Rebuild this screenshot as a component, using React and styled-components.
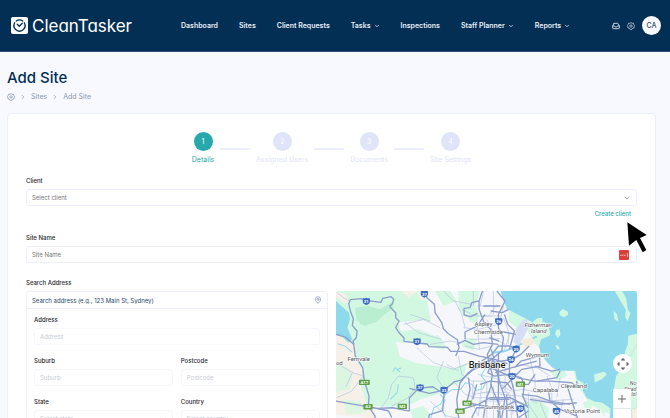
import styled, { createGlobalStyle, css } from "styled-components";
import { ChevronDown, ChevronRight, Inbox, MapPin, Minus, Plus } from "lucide-react";

const GlobalStyles = createGlobalStyle`
    :root {
        --color-navy: #042f55;
        --color-teal: #27a9ac;
        --color-page: #f8f9ff;
        --color-line: #eceefd;
        --color-step: #dfe4f8;
        --color-muted: #8797ae;
    }

    *, *::before, *::after {
        box-sizing: border-box;
        margin: 0;
        padding: 0;
    }

    html {
        scrollbar-width: none;
    }

    body {
        background-color: var(--color-page);
        color: #26282c;
        font-family: Inter, "Liberation Sans", sans-serif;
        font-size: 6px;
        line-height: 8px;
    }

    button, input, select {
        font: inherit;
        color: inherit;
        border: none;
        background: none;
    }

    a {
        color: inherit;
        text-decoration: none;
    }

    svg {
        display: block;
        flex-shrink: 0;
    }
`;

const Header = styled.header`
    display: flex;
    align-items: center;
    height: 52px;
    padding: 0 9px 0 11px;
    background-color: var(--color-navy);
    border-bottom: 1px solid #2c5074;
    color: #fff;
`;

const Brand = styled.a`
    display: flex;
    align-items: center;
    gap: 4px;
    font-size: 17px;
    line-height: 20px;
    font-feature-settings: "cv11";
`;

const Nav = styled.nav`
    display: flex;
    gap: 21px;
    margin-left: 49px;
    font-size: 7px;
    font-weight: 600;
    white-space: nowrap;
`;

const NavItem = styled.a`
    display: flex;
    align-items: center;
    gap: 3px;
    color: #e9eef5;
`;

const Tools = styled.div`
    display: flex;
    align-items: center;
    gap: 7px;
    margin-left: auto;
    color: #c5d0de;
`;

const ToolButton = styled.button`
    cursor: pointer;
`;

const Avatar = styled.button`
    width: 19px;
    height: 19px;
    border-radius: 50%;
    background-color: #f8f9ff;
    color: #33506f;
    font-size: 7px;
    font-weight: 500;
`;

const Main = styled.main`
    padding: 16px 14px 16px 7px;
`;

const Title = styled.h1`
    font-size: 15px;
    font-weight: 500;
    line-height: 20px;
    color: var(--color-navy);
    font-feature-settings: "cv11";
`;

const Breadcrumb = styled.nav`
    display: flex;
    align-items: center;
    gap: 5px;
    margin: 5px 0 12px;
    font-size: 7px;
    color: var(--color-muted);
`;

const Card = styled.form`
    padding: 18px;
    background-color: #fff;
    border: 1px solid var(--color-line);
    border-radius: 5px;
`;

const Steps = styled.ol`
    display: flex;
    justify-content: center;
    gap: 6px;
    margin-bottom: 13px;
    list-style: none;
`;

const Step = styled.li`
    display: flex;
    flex-direction: column;
    align-items: center;
    gap: 5px;
    font-size: 7px;
    color: ${(props) => (props.$active ? "var(--color-teal)" : "var(--color-step)")};
`;

const StepNumber = styled.span`
    display: grid;
    place-items: center;
    width: 19px;
    height: 19px;
    border-radius: 50%;
    background-color: currentColor;

    & span {
        color: #fff;
    }
`;

const StepLine = styled.li`
    width: 30px;
    height: 2px;
    margin-top: 16px;
    background-color: #ebeffc;
`;

const Field = styled.div`
    display: flex;
    flex-direction: column;
    gap: 4px;
`;

const Label = styled.label`
    font-weight: 500;
`;

const Control = styled.div`
    display: grid;
    grid-template-columns: 1fr auto;
    align-items: center;
    position: relative;
    height: 17px;
    color: #757575;
    border: 1px solid var(--color-line);
    border-radius: 3px;

    & > svg {
        position: absolute;
        right: 5px;
        pointer-events: none;
    }

    ${(props) =>
        props.$faded &&
        css`
            color: #c9ccd2;
            border-color: #f6f7fc;
        `}

    ${(props) =>
        props.$search &&
        css`
            color: #24496d;
            border-width: 0 0 1px;
            border-radius: 0;
        `}
`;

const controlText = css`
    width: 100%;
    height: 100%;
    padding: 0 5px;
    appearance: none;
    outline: none;
    opacity: 1;
`;

const Input = styled.input`
    ${controlText}

    &::placeholder {
        color: inherit;
        opacity: 1;
    }
`;

const Select = styled.select`
    ${controlText}
`;

const PasswordBadge = styled.button`
    width: 10px;
    height: 10px;
    margin-right: 7px;
`;

const LinkRow = styled.div`
    display: flex;
    justify-content: flex-end;
    position: relative;
    margin: 4px 0 16px;
    padding-right: 6px;
    font-weight: 500;
    color: var(--color-teal);
`;

const Pointer = styled.svg`
    position: absolute;
    top: 12px;
    right: -10px;
    width: 20px;
    height: 31px;
    pointer-events: none;
`;

const AddressArea = styled.div`
    display: grid;
    grid-template-columns: 1fr 1fr;
    gap: 8px;
    margin-top: 4px;
`;

const AddressBox = styled.div`
    border: 1px solid var(--color-line);
    border-radius: 3px;
`;

const AddressGrid = styled.div`
    display: grid;
    grid-template-columns: 1fr 1fr;
    gap: 12px 8px;
    padding: 7px;

    & > :first-child {
        grid-column: 1 / -1;
    }
`;

const SearchLabel = styled(Label)`
    display: block;
    margin-top: 16px;
`;

const MapFrame = styled.div`
    position: relative;
    overflow: hidden;
    border-radius: 3px;
`;

const MapDrawing = styled.svg`
    width: 100%;
    height: auto;
    font-family: Roboto, "Liberation Sans", sans-serif;
`;

const MapButton = styled.button`
    display: grid;
    place-items: center;
    width: 18px;
    height: 19px;
    color: #666;
    background-color: #fff;
`;

const CameraButton = styled(MapButton)`
    position: absolute;
    top: 63px;
    right: 5px;
    width: 19px;
    border-radius: 50%;
`;

const ZoomButtons = styled.div`
    position: absolute;
    top: 98px;
    right: 6px;
    background-color: #e6e6e6;
    display: grid;
    gap: 1px;
`;

const navItems = [
    { name: "Dashboard" },
    { name: "Sites" },
    { name: "Client Requests" },
    { name: "Tasks", menu: true },
    { name: "Inspections" },
    { name: "Staff Planner", menu: true },
    { name: "Reports", menu: true },
];

const steps = ["Details", "Assigned Users", "Documents", "Site Settings"];

const routes = [
    { x: 109, y: 51, no: "31" },
    { x: 283, y: 29, no: "27" },
    { x: 261, y: 172, no: "31" },
    { x: 270, y: 310, no: "37" },
    { x: 342, y: 317, no: "33" },
    { x: 506, y: 111, no: "26" },
    { x: 558, y: 194, no: "25" },
    { x: 543, y: 226, no: "24" },
    { x: 546, y: 276, no: "20" },
    { x: 571, y: 373, no: "30" },
    { x: 679, y: 380, no: "45" },
];

const motorways = [
    { x: 103, y: 294, no: "A17" },
    { x: 114, y: 367, no: "A2" },
    { x: 217, y: 366, no: "M2" },
    { x: 411, y: 356, no: "M7" },
    { x: 390, y: 380, no: "M5" },
    { x: 571, y: 299, no: "M1" },
];

const places = [
    { x: 86, y: 231, name: "Fernvale" },
    { x: 28, y: 243, name: "od" },
    { x: 460, y: 125, name: "Aspley" },
    { x: 475, y: 150, name: "Chermside" },
    { x: 622, y: 217, name: "Wynnum" },
    { x: 731, y: 312, name: "Cleveland" },
    { x: 646, y: 324, name: "Capalaba" },
    { x: 508, y: 375, name: "Sunnybank" },
    { x: 756, y: 385, name: "Victoria Point" },
    { x: 624, y: 127, name: "Fisherman", italic: true },
    { x: 626, y: 145, name: "Island", italic: true },
];

function LogoMark() {
    return (
        <svg width="17" height="17" viewBox="0 0 34 34" fill="none" stroke="#042f55" strokeWidth="2.600" strokeLinecap="round">
            <rect width="34" height="34" rx="4" fill="#fff" stroke="none" />
            <path d="M7.500 11.500A11 11 0 1 0 26.500 11.500" />
            <path d="M10.500 8A11 11 0 0 1 23.500 8" />
            <path d="M12.500 14.500l4 4 6-6" />
        </svg>
    );
}

function GearIcon({ size = 8 }) {
    return (
        <svg width={size} height={size} viewBox="0 0 24 24" fill="none" stroke="currentColor" strokeWidth="2.300" strokeLinejoin="round">
            <path d="M12 1.500l3 2.500 4-.5 1 4 3 2.500-1.500 3.500L21 18l-4 .5-2 3.500h-6l-2-3.500-4-.5-.5-4.500L1 10l3-2.500 1-4 4 .5z" />
            <circle cx="12" cy="12" r="3.500" />
        </svg>
    );
}

function BrisbaneMap() {
    return (
        <MapDrawing viewBox="18 20 904 500" role="img" aria-label="Map of Brisbane">
            <rect x="0" y="0" width="960" height="540" fill="#d2f8e2" />
            {/* bushland */}
            <g fill="#b9efd0">
                <path d="M75 70l40-5 35 10 35-22 5 20-30 20-20 20-35 10-25-15z" />
                <path d="M330 130l30-10 25 15 20-5 5 15-30 5-25 8-25-10z" />
                <path d="M90 95l30 5-10 25-20-5z" />
                <path d="M380 118l25-8 8 22-26 6z" />
            </g>
            {/* farmland */}
            <g fill="#f6f0e8">
                <path d="M18 150l40 25 20 5-5 45 25 30-5 50 15 50 40 20 40 15-10 35-160 5z" />
                <path d="M18 20l30 10 10 22-15 5-25-20z" />
                <path d="M262 20h60l-18 25-35 0z" />
                <path d="M345 62l25-5 5 15-20 10z" />
                <path d="M210 18h55l-30 22z" />
            </g>
            <path d="M18 235l30 10 20 30-10 40-40 10zM40 345l50 5 20 35-60 5z" fill="#dcf6e2" />
            {/* suburbs */}
            <g fill="#f6f7fa">
                <path d="M290 20h225l20 60 40 25 30 60 25 30 50 60 50 5 10 40 40 60 60 30v130H420l-120-20-80-30-20-40 20-55 50-30 70-20 30-45 10-25-60-10-60-8-50-20-12-45 30 5 70 25 55-10-45-60-15-70z" />
                <path d="M205 115l60-8 70 8 20 25-40 15-50-20-52 5z" />
                <path d="M130 365l70 3 80-20 60 5 60 50-20 117H230l-80-80z" />
                <path d="M225 170l80 15 60 25-10 20-60-15-70-20z" />
                <path d="M18 390l90 10 20 120H18z" />
            </g>
            <g fill="#d2f8e2">
                <path d="M385 20h65l-15 45 15 30-20 25-45-45z" />
                <path d="M315 20h45l20 30-40 15z" />
                <path d="M405 160l35 5-10 35-35-15z" />
                <path d="M362 255l50-20-15 60-55 15-20-35z" />
                <path d="M577 355l50-8 30 25-5 40-60 5z" />
                <path d="M660 262l40-8 12 20-30 15z" />
                <path d="M240 375l40-10 25 30-55 15z" />
            </g>
            {/* water */}
            <g fill="#8fd9ed">
                <path d="M511 18l8 30 12 25 27 15 30 16 18 9 6 26 27-26 14 4 8 36-28 12-6 20 5 24 18 24 18 18 17 8 50 0 5 26 20 10-2 24 12 22 25 11 20 2 26 18-10 132h160V18z" />
                <path d="M18 50l22 20 17 15 3 20-8 25 15 35-12 10-17-18-20-5z" />
            </g>
            <g fill="none" stroke="#8fd9ed" strokeWidth="3">
                <path d="M188 262l8-12 5 5 12-4M200 256l10 6M22 178l25 8 20 18" />
                <path d="M490 205l35-5 25-10 45-22 25-12" strokeWidth="6" />
                <path d="M485 235l-20 18-12 20 15 20-10 20-20 5-12-18-20-5-15 20-25 0-20 15-15 30-20 10-10 35" />
                <path d="M205 300l-4 25-20 20M330 330l15 18-10 25 12 25" />
            </g>
            <path d="M553 155l10-40 15-13 14 4 0 4 8 10-17 35-18 30-15-12z" fill="#d5def5" />
            <path d="M578 165l30-5 5 18-20 10-18-8z" fill="#f3eadb" />
            {/* islands */}
            <g fill="#d2f8e2">
                <path d="M611 110l12-9 13 0 5 30 20 10-20 12-28 2-14-15z" />
                <path d="M688 83l11-9 14 8 1 9-12 8-13-6z" />
                <path d="M678 138l11-3 2 16-8 10-8-12zM676 182l9 2 4 12-9-3z" />
                <path d="M854 20h22l12 22 5 35 8 10-9 24-7-13 2-22-16-26zM850 80l10 8 5 24-12-8z" />
                <path d="M792 270l30-8 8 8-14 14-22 10z" />
                <path d="M894 154l28-6v372h-70l8-110-8-100 6-35 18-25 9-50 8-20z" />
                <path d="M758 355l15-6 13 8-2 16-20-3zM812 380l9-8 3 26z" />
                <path d="M537 80l20 8 31 16-8 2-20 24-25-20zM737 290l10 7-3 12-9-5z" />
            </g>
            <path d="M922 175l-10 20-12 20M904 375l18-5v60h-15z" stroke="#b8c4bd" strokeWidth="1" fill="#f6f0e8" />
            {/* minor roads */}
            <g fill="none" stroke="#b5c2df" strokeWidth="2">
                <path d="M18 22l25 20 20 10M18 235l50 30 35 10M100 275l-35 45-45 20M68 262l-20 45M185 300l20-25 45 5 5 30-20 30-50 25M150 375l25-35 10-40" />
                <path d="M220 120l60-15 50 25M225 115l40 30 70 20M240 90l60 20M300 180l60-10 30 5M260 190l50 45 60 20 50-20M340 230l-20 50 20 30" />
                <path d="M340 20l30 30 55 10M375 50l20 40 10 40M430 20v45M395 75l40 20 50 0M400 130l45 5 60-15M405 185l40 10 40-10M440 105l8 90" />
                <path d="M385 215l10 55 30 20 40 0M370 290l35 40 30 10 45 0M430 290l-5 60 20 45M455 300l-10 95M350 240l35 20M300 350l50 45 60 10" />
                <path d="M515 300l25 20 40-5 50 10M510 330l60 5 50 20M600 225l15 60 0 40M570 240l50 10 40 25M650 275l15 35 0 40M690 280l-10 60M600 340l50 10 80-5M630 355l20 50M700 345l-15 60" />
                <path d="M520 100l15 40 0 40M500 60l-20 30M520 65l-15 60M485 160l40 20M540 145l-20 60M460 20l-10 45M430 330l55-10M510 350l-10 60M540 330l5 80" />
                <path d="M490 20v70M440 65h75M455 95l60 0M420 165l90-2M470 105l25 50M500 225l10 70 50 70M445 270l65 15M455 325h85M450 350h70M470 295v110M490 305v100M525 245v80M550 300l-2 90M595 325v90M575 330l50 75" />
            </g>
            {/* highways */}
            <g fill="none" stroke="#8c9ecb" strokeWidth="4" strokeLinejoin="round">
                <path d="M18 150l28 8 25 22 5 35 22 35 5 40 14 45-2 30 20 30 0 50" />
                <path d="M72 180l-3-10 10-10 2-20-14-17 3-20-8-20-6-25 5-12 32-3 15 5 45 6 5-12 25-5 8 8-4 14-8 7 18 20 0 14 10 10-10 20 10 15 15 16 0 10 40 5 30 3 5 8 55 2 10 12 40 0 45 14 40 8 45 15" />
                <path d="M283 20l8 20 22 20 2 25 20 30 5 18 15 15 27 18 5 24-10 25" />
                <path d="M18 350l55 10 70 12 45-2 50 10M115 367l60 12 10 20M238 380v-40l28-28 42-5 34 22-4 50-40 12-5 20" />
                <path d="M238 312l60 15 45-10 30-25 20-5 35-30 40-20 15-10M380 180l25-12 25 12 30-5 45 5M405 165l0-22 40-20 30-5" />
                <path d="M457 20l-10 30 0 25 15 40 20 20 5 45-15 30 5 30 10 30-5 30 10 25 15 35 5 55M445 50l-20 5-5 15-18 2 0 20 20 5 20-10" />
                <path d="M500 20l25 30-20 40 0 40 15 30-5 40-30 25-40 15-30 25-25 30-10 50 5 50 10 40" />
                <path d="M455 230l30-20 20-25 35 0 18 10-20 40 0 30 15 60 10 75M483 195l8 25-18 45 20 10 40-5 40 10 10 20-5 35 15 35" />
                <path d="M487 235l60-10 25-15 25-25M495 265l50-15 75-20M553 250l20-20 55-15 2 30-55 10-20 20M560 280l55 10 45 0 65 5 10 10M615 245l50 15 25-5" />
                <path d="M615 270l-20 30-20 0M620 290l60-10 10-20M575 330l45 5 40 15 60 10M655 320l5 30 30 25 50 20M710 300l20 65 15 45M600 345l90 15 50-5" />
                <path d="M450 300l30-10 50 5 15 20M415 280l5 35-10 40 55 10M395 375l50-15 35-20 60 0 50 25M440 300l-12 45M425 400l15-30 50 0 70 10M485 300l-15 40-10 60M510 300l15 40-10 60" />
                <path d="M500 380l55-30 25 10 10 45M565 400l30-20M480 250l70 30-35 35M740 290l0 20M523 90l10 30 20 20-15 55" />
                <path d="M535 75l-18 10-35-5M460 65l50 0M465 90l-20 30M507 140l50 10M507 170l-30-10M505 205v195M530 330v75M490 225l20 75M478 345h60" />
            </g>
            <g fontSize="13" fontWeight="700" textAnchor="middle" fill="#fff">
                {routes.map((route) => (
                    <g key={`${route.x}-${route.y}`} transform={`translate(${route.x} ${route.y})`}>
                        <path d="M-10-10q5 2 10-1 5 3 10 1 3 12-2 17-4 3-8 4-4-1-8-4-5-5-2-17z" fill="#3c6cc0" />
                        <text y="5">{route.no}</text>
                    </g>
                ))}
                {motorways.map((road) => (
                    <g key={road.no} transform={`translate(${road.x} ${road.y})`}>
                        <rect x={road.no.length > 2 ? -16 : -14} y="-8" width={road.no.length > 2 ? 32 : 28} height="16" rx="2" fill="#5d9f45" />
                        <text y="5">{road.no}</text>
                    </g>
                ))}
            </g>
            <g fontSize="18" textAnchor="middle" fill="#50555c" stroke="#fff" strokeWidth="3" paintOrder="stroke">
                {places.map((place) => (
                    <text key={place.name} x={place.x} y={place.y} fontStyle={place.italic ? "italic" : "normal"}>
                        {place.name}
                    </text>
                ))}
                <text x="471" y="251" fontSize="28" fontWeight="500" fill="#222">
                    Brisbane
                </text>
                {/* North Stradbroke Island runs off the map's edge */}
                <g fontSize="16" fontStyle="italic" textAnchor="end">
                    <text x="919" y="302">No</text>
                    <text x="919" y="319">Strad</text>
                    <text x="919" y="336">Isl</text>
                </g>
            </g>
        </MapDrawing>
    );
}

function TextField({ id, label, faded, children }) {
    return (
        <Field>
            <Label htmlFor={id}>{label}</Label>
            <Control $faded={faded}>
                <Input id={id} placeholder={label} disabled={faded} />
                {children}
            </Control>
        </Field>
    );
}

function SelectField({ id, label, text, faded }) {
    return (
        <Field>
            <Label htmlFor={id}>{label}</Label>
            <Control $faded={faded}>
                <Select id={id} disabled={faded}>
                    <option>{text}</option>
                </Select>
                <ChevronDown size={8} />
            </Control>
        </Field>
    );
}

function App() {
    return (
        <>
            <GlobalStyles />
            <Header>
                <Brand href="#">
                    <LogoMark />
                    CleanTasker
                </Brand>
                <Nav>
                    {navItems.map((item) => (
                        <NavItem href="#" key={item.name}>
                            {item.name}
                            {item.menu && <ChevronDown size={6} strokeWidth={3} />}
                        </NavItem>
                    ))}
                </Nav>
                <Tools>
                    <ToolButton aria-label="Inbox">
                        <Inbox size={8} strokeWidth={3} />
                    </ToolButton>
                    <ToolButton aria-label="Settings">
                        <GearIcon />
                    </ToolButton>
                    <Avatar>CA</Avatar>
                </Tools>
            </Header>

            <Main>
                <Title>Add Site</Title>
                <Breadcrumb>
                    <GearIcon />
                    <ChevronRight size={6} strokeWidth={3} />
                    <a href="#">Sites</a>
                    <ChevronRight size={6} strokeWidth={3} />
                    <span>Add Site</span>
                </Breadcrumb>

                <Card>
                    <Steps>
                        {steps.map((step, i) => [
                            i > 0 && <StepLine key={`line-${step}`} aria-hidden="true" />,
                            <Step key={step} $active={i === 0}>
                                <StepNumber>
                                    <span>{i + 1}</span>
                                </StepNumber>
                                {step}
                            </Step>,
                        ])}
                    </Steps>

                    <SelectField id="client" label="Client" text="Select client" />
                    <LinkRow>
                        <a href="#">Create client</a>
                        <Pointer viewBox="0 0 60 93">
                            <path d="M1 1l58 38-20 9 19 36-11 7-19-37-22 17z" fill="#000" />
                        </Pointer>
                    </LinkRow>

                    <TextField id="site-name" label="Site Name">
                        <PasswordBadge type="button" aria-label="Fill from password manager">
                            <svg width="10" height="10" viewBox="0 0 30 30">
                                <rect width="30" height="30" rx="3" fill="#d9413c" />
                                <path d="M4 14h3v3H4zM10 14h3v3h-3zM16 14h3v3h-3zM24 10h2v10h-2z" fill="#fff" />
                            </svg>
                        </PasswordBadge>
                    </TextField>

                    <SearchLabel htmlFor="search">Search Address</SearchLabel>
                    <AddressArea>
                        <AddressBox>
                            <Control $search>
                                <Input id="search" placeholder="Search address (e.g., 123 Main St, Sydney)" />
                                <MapPin size={8} color="#7f92b5" />
                            </Control>
                            <AddressGrid>
                                <TextField id="address" label="Address" faded />
                                <TextField id="suburb" label="Suburb" faded />
                                <TextField id="postcode" label="Postcode" faded />
                                <SelectField id="state" label="State" text="Select state" faded />
                                <SelectField id="country" label="Country" text="Select country" faded />
                            </AddressGrid>
                        </AddressBox>
                        <MapFrame>
                            <BrisbaneMap />
                            <CameraButton type="button" aria-label="Map camera controls">
                                <svg width="12" height="12" viewBox="0 0 24 24" fill="none" stroke="currentColor" strokeWidth="3">
                                    <path d="M9 5l3-3 3 3M9 19l3 3 3-3M5 9l-3 3 3 3M19 9l3 3-3 3" />
                                </svg>
                            </CameraButton>
                            <ZoomButtons>
                                <MapButton type="button" aria-label="Zoom in">
                                    <Plus size={12} />
                                </MapButton>
                                <MapButton type="button" aria-label="Zoom out">
                                    <Minus size={12} />
                                </MapButton>
                            </ZoomButtons>
                        </MapFrame>
                    </AddressArea>
                </Card>
            </Main>
        </>
    );
}

export default App;
